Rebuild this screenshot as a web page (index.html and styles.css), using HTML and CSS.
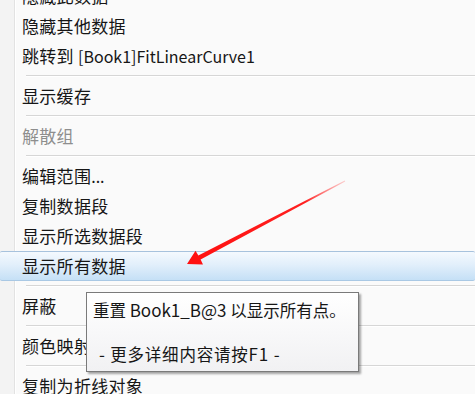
FILE: index.html
```html
<!DOCTYPE html>
<html lang="zh-CN">
<head>
<meta charset="utf-8">
<link rel="stylesheet" href="styles.css">
</head>
<body>
<div class="menu">
  <div class="item">隐藏此数据</div>
  <div class="item">隐藏其他数据</div>
  <div class="item">跳转到 <span class="lat">[Book1]FitLinearCurve1</span></div>
  <div class="sep"></div>
  <div class="item">显示缓存</div>
  <div class="sep"></div>
  <div class="item disabled">解散组</div>
  <div class="sep"></div>
  <div class="item">编辑范围<span class="lat">...</span></div>
  <div class="item">复制数据段</div>
  <div class="item">显示所选数据段</div>
  <div class="item hot">显示所有数据</div>
  <div class="sep"></div>
  <div class="item">屏蔽</div>
  <div class="sep"></div>
  <div class="item">颜色映射<span class="lat">...</span></div>
  <div class="sep"></div>
  <div class="item">复制为折线对象</div>
</div>
<div class="tip">
  <div class="tip-line">重置 <span class="tlat">Book1_B@3</span> 以显示所有点。</div>
  <div class="tip-line more"><span class="tlat">-</span> 更多详细内容请按<span class="tlat">F1 -</span></div>
</div>
<svg class="arrow" width="475" height="394" viewBox="0 0 475 394">
  <defs>
    <linearGradient id="ag" x1="345" y1="181" x2="187" y2="264" gradientUnits="userSpaceOnUse">
      <stop offset="0" stop-color="#ff6060" stop-opacity="0.3"/>
      <stop offset="0.25" stop-color="#ff2020"/>
      <stop offset="1" stop-color="#ff1010"/>
    </linearGradient>
  </defs>
  <polygon fill="url(#ag)" points="187,264 203,264.5 200.6,259.6 345.2,181.4 344.8,180.6 198.3,255.5 195.5,250.8"/>
</svg>
</body>
</html>
```
FILE: styles.css
```css
html, body {
  margin: 0;
  padding: 0;
  width: 475px;
  height: 394px;
  overflow: hidden;
  background: #fafafa;
}
body {
  position: relative;
  font-family: "Noto Sans CJK SC", "Noto Sans", sans-serif;
  font-size: 17px;
  color: #161616;
}
.menu {
  margin-top: -19px;
  background: linear-gradient(to right, #f3f3f3 0, #f3f3f3 14px, #e2e2e2 14px, #e2e2e2 15px, #ffffff 15px, #ffffff 16px, #fafafa 16px);
  min-height: 430px;
}
.item {
  height: 30px;
  line-height: 30px;
  padding-left: 22px;
  white-space: nowrap;
  letter-spacing: 0.3px;
  box-sizing: border-box;
}
.lat {
  font-size: 16px;
  letter-spacing: 0;
}
.item.disabled {
  color: #8e8e8e;
}
.item.hot {
  border-top: 1px solid #a7c2dd;
  border-bottom: 1px solid #a9c8e4;
  background: linear-gradient(to bottom, #f4f9fe 0%, #e2effb 45%, #c5e0f6 100%);
  border-radius: 2px;
  line-height: 28px;
}
.sep {
  height: 10px;
  display: flex;
  flex-direction: column;
  justify-content: center;
  padding-left: 26px;
}
.sep::before {
  content: "";
  display: block;
  height: 1px;
  background: #d6d6d6;
  border-bottom: 1px solid #ffffff;
}
.tip {
  position: absolute;
  left: 86px;
  top: 292px;
  width: 273px;
  height: 80px;
  box-sizing: border-box;
  border: 1px solid #7a7a7a;
  background: linear-gradient(to bottom, #ffffff 0%, #f1f1f3 100%);
  box-shadow: 2px 2px 2px rgba(0, 0, 0, 0.35);
  padding: 3px 0 0 6px;
  font-size: 16.5px;
  color: #161616;
}
.tlat {
  font-size: 17px;
}
.tip-line {
  height: 28px;
  line-height: 28px;
  white-space: nowrap;
}
.tip-line.more {
  margin-top: 16px;
  padding-left: 6px;
  letter-spacing: 0.8px;
}
.arrow {
  position: absolute;
  left: 0;
  top: 0;
  pointer-events: none;
}
```
